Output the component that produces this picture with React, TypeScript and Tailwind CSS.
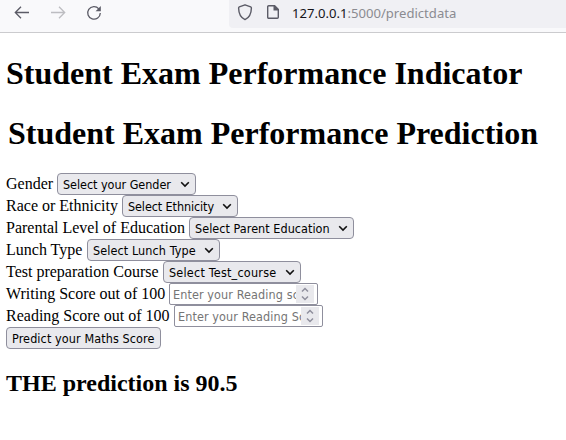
import React from "react";

const control =
  "flex h-[22px] shrink-0 items-center border border-[#8f8f9d] font-['DejaVu_Sans_Condensed','DejaVu_Sans',sans-serif] [font-stretch:condensed] text-[12.5px] leading-[19px] whitespace-nowrap";

function Label({ width, children }: { width: string; children: React.ReactNode }) {
  return <label className={`${width} shrink-0 whitespace-nowrap`}>{children}</label>;
}

function Select({ width, text, children }: { width: string; text: string; children: string }) {
  return (
    <button type="button" className={`${control} ${width} justify-between rounded-[4px] bg-[#e9e9ed] pr-[5px] pl-[5px]`}>
      <span className={`${text} mt-px text-left`}>{children}</span>
      <svg width="10" height="8" viewBox="0 0 10 8" fill="none" stroke="#111" strokeWidth="1.6">
        <path d="M1.2 2.2L5 6l3.8-3.8" />
      </svg>
    </button>
  );
}

function NumberInput({ children }: { children: string }) {
  return (
    <div className={`${control} w-[149px] rounded-[2px] bg-white pr-[3px] pl-[3px] text-[#757575]`}>
      <span className="mt-px w-[123px] overflow-hidden tracking-[0.1px]">{children}</span>
      <span className="flex h-[18px] w-[18px] shrink-0 items-center justify-center bg-[#e9e9ed]">
        <svg width="8" height="14" viewBox="0 0 8 14" fill="none" stroke="#8f8f9d" strokeWidth="1.5">
          <path d="M1 4.5l3-3 3 3M1 9.5l3 3 3-3" />
        </svg>
      </span>
    </div>
  );
}

export default function App() {
  return (
    <div className="h-[440px] w-[566px] overflow-hidden bg-white font-['Liberation_Serif',serif] text-[16px] text-black">
      <header className="flex h-[33px] border-b border-[#cbcbce] bg-[#f9f9fb]">
        <nav className="flex w-[229px] shrink-0 gap-[20px] pt-[5px] pl-[14px]">
          <svg width="16" height="16" viewBox="0 0 16 16" fill="none" stroke="#5b5b66" strokeWidth="1.3">
            <path d="M15 7.5H1.5M7 1.8L1.3 7.5 7 13.2" />
          </svg>
          <svg width="16" height="16" viewBox="0 0 16 16" fill="none" stroke="#bdbdc1" strokeWidth="1.3">
            <path d="M1 7.5h13.5M9 1.8l5.7 5.7L9 13.2" />
          </svg>
          <svg width="16" height="16" viewBox="0 0 16 16" fill="none" stroke="#5b5b66" strokeWidth="1.3">
            <path d="M12.8 3.8A6.3 6.3 0 1 0 14.3 8" />
            <path d="M14.8 1v5.2H9.6z" fill="#5b5b66" stroke="none" />
          </svg>
        </nav>
        <div className="flex h-[28px] flex-1 rounded-bl-[4px] bg-[#f0f0f4] pl-[8px]">
          <svg className="mt-[4px]" width="16" height="17" viewBox="0 0 16 17" fill="none" stroke="#5b5b66" strokeWidth="1.4" strokeLinejoin="round">
            <path d="M8 .8l5.7 2.1q.7.3.7 1C14.3 9.3 12.2 13.6 8 15.6 3.8 13.6 1.7 9.3 1.6 3.9q0-.7.7-1z" />
          </svg>
          <svg className="mt-[5px] ml-[13px]" width="14" height="15" viewBox="0 0 14 15" fill="none" stroke="#5b5b66" strokeWidth="1.4">
            <path d="M2.7.7H8.5l3.8 3.8v7.7a1 1 0 0 1-1 1H2.7a1 1 0 0 1-1-1V1.7a1 1 0 0 1 1-1z" />
            <path d="M7.5.2h1.3l4 4v1.3H7.5z" fill="#5b5b66" stroke="none" />
          </svg>
          <span className="ml-[12px] pt-[3px] font-['Noto_Sans',sans-serif] text-[13.1px] leading-[20px] whitespace-nowrap text-[#15141a]">
            127.0.0.1<span className="text-[#8b8b91]">:5000/predictdata</span>
          </span>
        </div>
      </header>

      <main className="pl-[6px]">
        <h1 className="mt-[22px] text-[32px] leading-[37px] font-bold whitespace-nowrap">Student Exam Performance Indicator</h1>
        <h1 className="mt-[23px] pl-[2px] text-[32px] leading-[37px] font-bold whitespace-nowrap">Student Exam Performance Prediction</h1>

        <form className="mt-[21px] leading-[22px]">
          <div className="flex h-[22px]">
            <Label width="w-[51px]">Gender</Label>
            <Select width="w-[139px]" text="w-[112px] tracking-[-0.04px]">Select your Gender</Select>
          </div>
          <div className="flex h-[22px]">
            <Label width="w-[116px]">Race or Ethnicity</Label>
            <Select width="w-[116px]" text="w-[89px] tracking-[-0.1px]">Select Ethnicity</Select>
          </div>
          <div className="flex h-[22px]">
            <Label width="w-[183px]">Parental Level of Education</Label>
            <Select width="w-[165px]" text="w-[138px] tracking-[0.04px]">Select Parent Education</Select>
          </div>
          <div className="flex h-[22px]">
            <Label width="w-[81px]">Lunch Type</Label>
            <Select width="w-[133px]" text="w-[106px] tracking-[0.1px]">Select Lunch Type</Select>
          </div>
          <div className="flex h-[22px]">
            <Label width="w-[157px]">Test preparation Course</Label>
            <Select width="w-[138px]" text="w-[111px] tracking-[0.22px]">Select Test_course</Select>
          </div>
          <div className="flex h-[22px]">
            <Label width="w-[163px]">Writing Score out of 100</Label>
            <NumberInput>Enter your Reading score</NumberInput>
          </div>
          <div className="flex h-[22px]">
            <Label width="w-[168px]">Reading Score out of 100</Label>
            <NumberInput>Enter your Reading Score</NumberInput>
          </div>
          <button type="button" className={`${control} w-[155px] rounded-[4px] bg-[#e9e9ed] pl-[5px]`}>
            <span className="mt-px tracking-[0.1px]">Predict your Maths Score</span>
          </button>
        </form>

        <h2 className="mt-[21px] text-[24px] leading-[27px] font-bold">THE prediction is 90.5</h2>
      </main>
    </div>
  );
}
